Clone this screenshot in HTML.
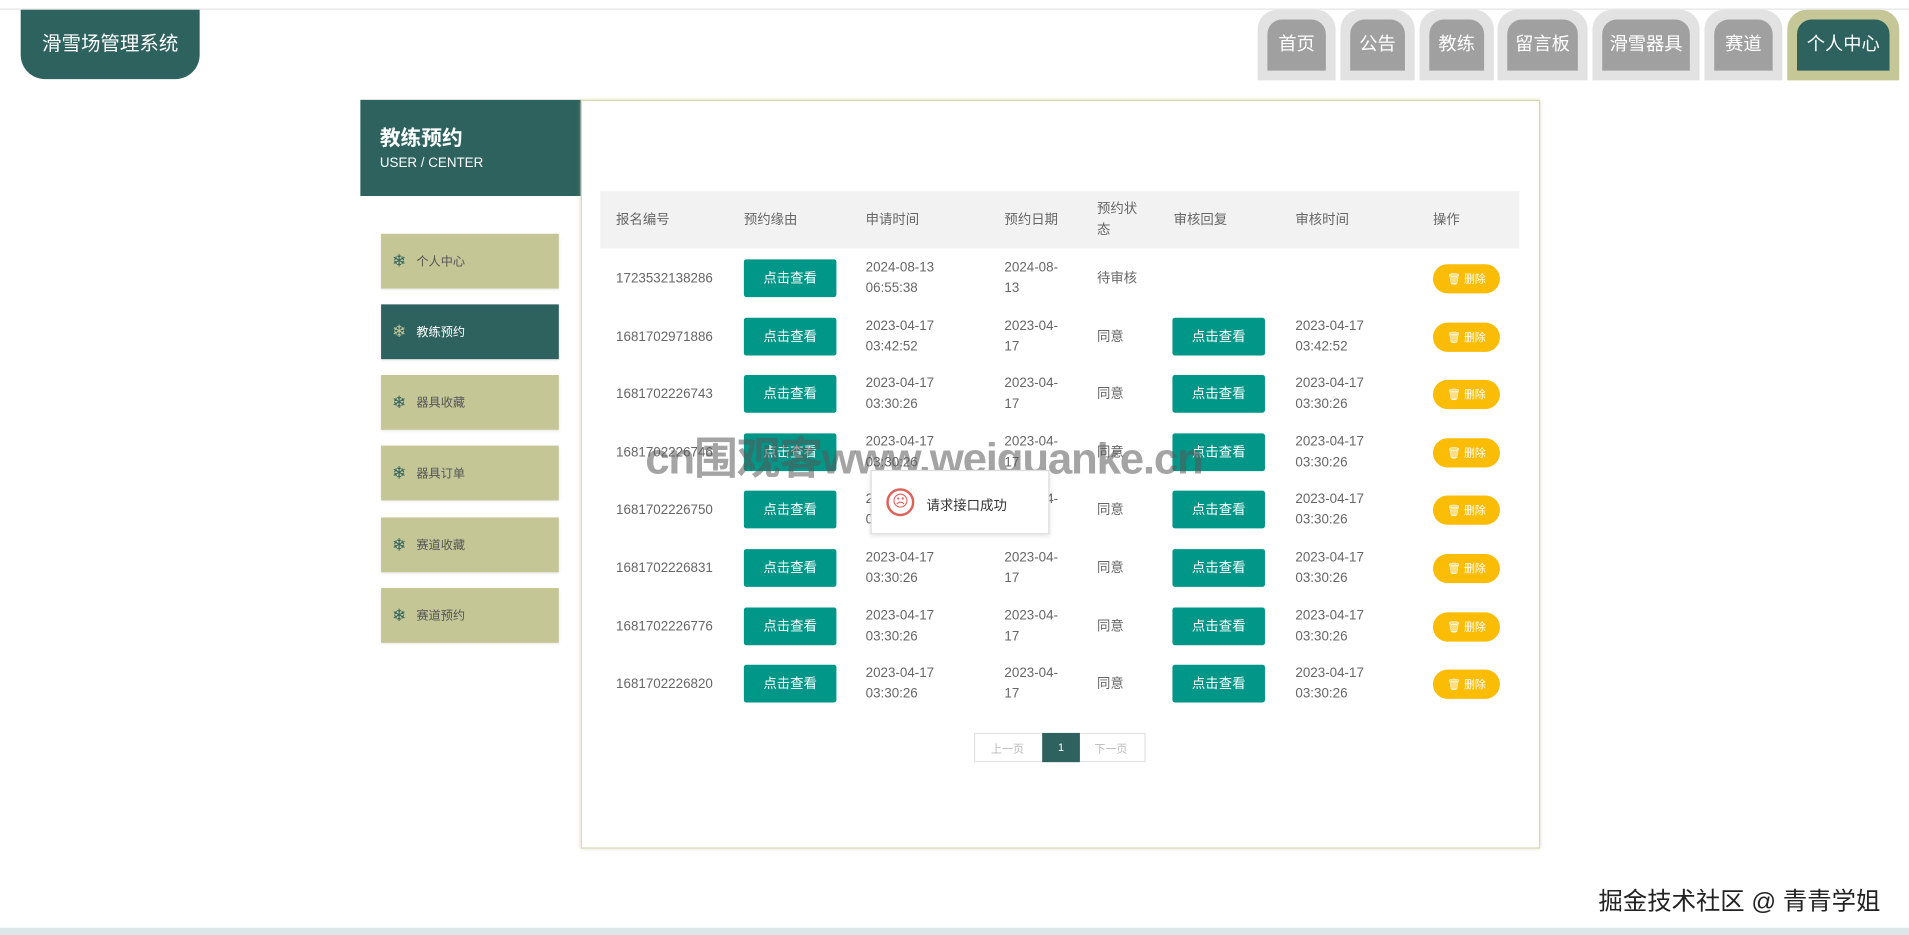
<!DOCTYPE html>
<html><head><meta charset="utf-8"><style>
*{margin:0;padding:0;box-sizing:border-box}
html,body{width:1909px;height:935px;overflow:hidden;background:#fff}
#w{position:absolute;left:0;top:0;width:1568px;height:768px;transform:scale(1.21748);transform-origin:0 0;font-family:"Liberation Sans","Noto Sans CJK SC",sans-serif;color:#555}
.a{position:absolute}
.tab{position:absolute;top:8px;height:58px;background:#e2e2e2;border-radius:16px 16px 0 0}
.tab i{position:absolute;left:8px;right:8px;top:8px;bottom:8px;background:#a0a0a0;border-radius:12px 12px 0 0;font-style:normal;color:#fff;font-size:15px;text-align:center;line-height:42px}
.mi{position:absolute;left:313px;width:146px;height:45px;background:#c4c696;font-size:10px;color:#555;line-height:47px;padding-left:29px;box-shadow:0 1px 2px rgba(0,0,0,.1)}
.mi b{position:absolute;left:9px;top:0;font-size:14px;color:#2e625f;font-weight:normal;line-height:45px}
.mi.on{background:#2e625f;color:#fff}.mi.on b{color:#c4c696}
.t{position:absolute;font-size:11px;color:#666;line-height:17px}
.btn{position:absolute;width:76px;height:31px;background:#009688;color:#fff;font-size:11px;text-align:center;line-height:32px;border-radius:2px}
.del{position:absolute;left:1177px;width:55px;height:24px;background:#fbbc05;border-radius:12px;color:#fff;font-size:9px;line-height:25px;text-align:center}
</style></head><body><div id="w">
<div class="a" style="left:0;top:7px;width:1568px;height:1px;background:#e4e4e4"></div>
<div class="a" style="left:17px;top:8px;width:147px;height:57px;background:#2e625f;border-radius:0 0 20px 20px;color:#fff;font-size:16px;line-height:58px;text-align:center">滑雪场管理系统</div>
<div class="tab" style="left:1033px;width:64px"><i>首页</i></div>
<div class="tab" style="left:1101px;width:61px"><i>公告</i></div>
<div class="tab" style="left:1166px;width:61px"><i>教练</i></div>
<div class="tab" style="left:1230px;width:74px"><i>留言板</i></div>
<div class="tab" style="left:1308px;width:88px"><i>滑雪器具</i></div>
<div class="tab" style="left:1400px;width:64px"><i>赛道</i></div>
<div class="tab" style="left:1468px;width:92px;background:#c5c796"><i style="background:#2e625f">个人中心</i></div>

<div class="a" style="left:296px;top:82px;width:181px;height:79px;background:#2e625f;color:#fff">
<div class="a" style="left:16px;top:17px;font-size:17px;font-weight:bold">教练预约</div>
<div class="a" style="left:16px;top:46px;font-size:11px">USER / CENTER</div></div>
<div class="mi" style="top:192px"><b>❄</b>个人中心</div>
<div class="mi on" style="top:250px"><b>❄</b>教练预约</div>
<div class="mi" style="top:308px"><b>❄</b>器具收藏</div>
<div class="mi" style="top:366px"><b>❄</b>器具订单</div>
<div class="mi" style="top:425px"><b>❄</b>赛道收藏</div>
<div class="mi" style="top:483px"><b>❄</b>赛道预约</div>

<div class="a" style="left:477px;top:82px;width:788px;height:615px;border:1px solid #d8dab6;box-shadow:0 0 3px rgba(180,185,120,.5)"></div>
<div class="a" style="left:493px;top:157px;width:755px;height:47px;background:#f2f2f2"></div>
<div class="t" style="left:506px;top:173px">报名编号</div>
<div class="t" style="left:611px;top:173px">预约缘由</div>
<div class="t" style="left:711px;top:173px">申请时间</div>
<div class="t" style="left:825px;top:173px">预约日期</div>
<div class="t" style="left:901px;top:164px">预约状<br>态</div>
<div class="t" style="left:964px;top:173px">审核回复</div>
<div class="t" style="left:1064px;top:173px">审核时间</div>
<div class="t" style="left:1177px;top:173px">操作</div>
<div id="rows"></div>
<div class="a" style="left:800px;top:602px;width:141px;height:24px;border:1px solid #e2e2e2;font-size:9px;color:#bbb;line-height:24px">
<span class="a" style="left:13px">上一页</span>
<span class="a" style="left:55px;top:-1px;width:31px;height:24px;background:#2e625f;color:#fff;text-align:center;line-height:24px">1</span>
<span class="a" style="left:98px">下一页</span></div>

<div class="a" style="left:530px;top:348px;font-size:36px;color:rgba(90,90,90,.55);font-weight:bold;letter-spacing:-1px;white-space:nowrap">cn围观客www.weiguanke.cn</div>
<div class="a" style="left:715px;top:386px;width:147px;height:53px;background:#fff;border:1px solid #ddd;box-shadow:0 1px 4px rgba(0,0,0,.12)">
<div class="a" style="left:12px;top:14px;width:23px;height:23px;border:2px solid #e0605a;border-radius:50%;color:#e0605a;font-size:13px;text-align:center;line-height:18px">☹</div>
<div class="a" style="left:45px;top:20px;font-size:11px;color:#333">请求接口成功</div></div>

<div class="a" style="left:1313px;top:724px;font-size:20px;color:#222;white-space:nowrap">掘金技术社区 @ 青青学姐</div>
<div class="a" style="left:0;top:762px;width:1568px;height:6px;background:#dbe7e9"></div>
</div>
<script>
var d=[["1723532138286","2024-08-13","06:55:38","2024-08-","13","待审核","",""],
["1681702971886","2023-04-17","03:42:52","2023-04-","17","同意","2023-04-17","03:42:52"]];
["1681702226743","1681702226746","1681702226750","1681702226831","1681702226776","1681702226820"].forEach(function(n){d.push([n,"2023-04-17","03:30:26","2023-04-","17","同意","2023-04-17","03:30:26"])});
var h="";
d.forEach(function(r,i){var c=229+i*47.6;
h+='<div class="t" style="left:506px;top:'+(c-8)+'px">'+r[0]+'</div>';
h+='<div class="btn" style="left:611px;top:'+(c-16)+'px">点击查看</div>';
h+='<div class="t" style="left:711px;top:'+(c-17)+'px">'+r[1]+'<br>'+r[2]+'</div>';
h+='<div class="t" style="left:825px;top:'+(c-17)+'px">'+r[3]+'<br>'+r[4]+'</div>';
h+='<div class="t" style="left:901px;top:'+(c-8)+'px">'+r[5]+'</div>';
if(r[6]){h+='<div class="btn" style="left:963px;top:'+(c-16)+'px">点击查看</div>';
h+='<div class="t" style="left:1064px;top:'+(c-17)+'px">'+r[6]+'<br>'+r[7]+'</div>';}
h+='<div class="del" style="top:'+(c-12)+'px">🗑 删除</div>';});
document.getElementById("rows").outerHTML=h;
</script>
</body></html>
